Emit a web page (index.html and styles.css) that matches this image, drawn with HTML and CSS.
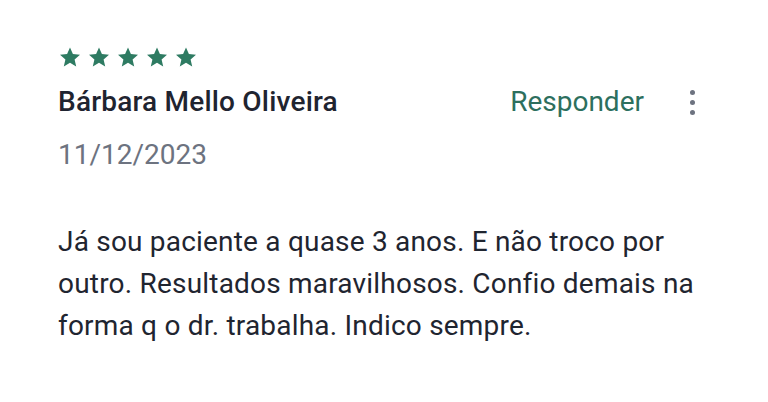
FILE: index.html
```html
<!DOCTYPE html>
<html lang="pt">
<head>
<meta charset="utf-8">
<link rel="stylesheet" href="styles.css">
</head>
<body>
<div class="review">
  <div class="stars">
    <svg class="star" viewBox="0 0 24 24"><path d="M12 2.5l2.9 6.6 7.1.6-5.4 4.7 1.6 7-6.2-3.7-6.2 3.7 1.6-7L2 9.7l7.1-.6z"/></svg>
    <svg class="star" viewBox="0 0 24 24"><path d="M12 2.5l2.9 6.6 7.1.6-5.4 4.7 1.6 7-6.2-3.7-6.2 3.7 1.6-7L2 9.7l7.1-.6z"/></svg>
    <svg class="star" viewBox="0 0 24 24"><path d="M12 2.5l2.9 6.6 7.1.6-5.4 4.7 1.6 7-6.2-3.7-6.2 3.7 1.6-7L2 9.7l7.1-.6z"/></svg>
    <svg class="star" viewBox="0 0 24 24"><path d="M12 2.5l2.9 6.6 7.1.6-5.4 4.7 1.6 7-6.2-3.7-6.2 3.7 1.6-7L2 9.7l7.1-.6z"/></svg>
    <svg class="star" viewBox="0 0 24 24"><path d="M12 2.5l2.9 6.6 7.1.6-5.4 4.7 1.6 7-6.2-3.7-6.2 3.7 1.6-7L2 9.7l7.1-.6z"/></svg>
  </div>
  <div class="header">
    <div class="name">Bárbara Mello Oliveira</div>
    <div class="actions">
      <span class="reply">Responder</span>
      <span class="more"><i></i><i></i><i></i></span>
    </div>
  </div>
  <div class="date">11/12/2023</div>
  <p class="text">Já sou paciente a quase 3 anos. E não troco por outro. Resultados maravilhosos. Confio demais na forma q o dr. trabalha. Indico sempre.</p>
</div>
</body>
</html>
```
FILE: styles.css
```css
html, body {
  margin: 0;
  background: #ffffff;
}
body {
  font-family: Roboto, "Noto Sans", sans-serif;
  width: 768px;
  height: 402px;
  overflow: hidden;
}
.review {
  padding: 45px 0 0 58px;
  width: 650px;
}
.stars {
  display: flex;
  gap: 5px;
  height: 24px;
}
.star {
  width: 24px;
  height: 24px;
  fill: #2e7b62;
}
.header {
  display: flex;
  align-items: center;
  justify-content: space-between;
  margin-top: 15px;
  height: 36px;
  padding-right: 13px;
}
.name {
  font-size: 28px;
  line-height: 36px;
  font-weight: 500;
  color: #1f2430;
  letter-spacing: 0.2px;
}
.actions {
  display: flex;
  align-items: center;
}
.reply {
  font-size: 28px;
  line-height: 36px;
  color: #2d6f5e;
  margin-right: 46px;
}
.more {
  display: flex;
  flex-direction: column;
  gap: 5px;
  width: 5px;
}
.more i {
  display: block;
  width: 5px;
  height: 5px;
  border-radius: 50%;
  background: #6d7380;
}
.date {
  margin-top: 17px;
  font-size: 28px;
  line-height: 36px;
  color: #6d7380;
}
.text {
  margin: 48px 0 0 0;
  font-size: 28px;
  line-height: 42px;
  color: #1f2530;
  letter-spacing: 0.2px;
  width: 650px;
}
```
